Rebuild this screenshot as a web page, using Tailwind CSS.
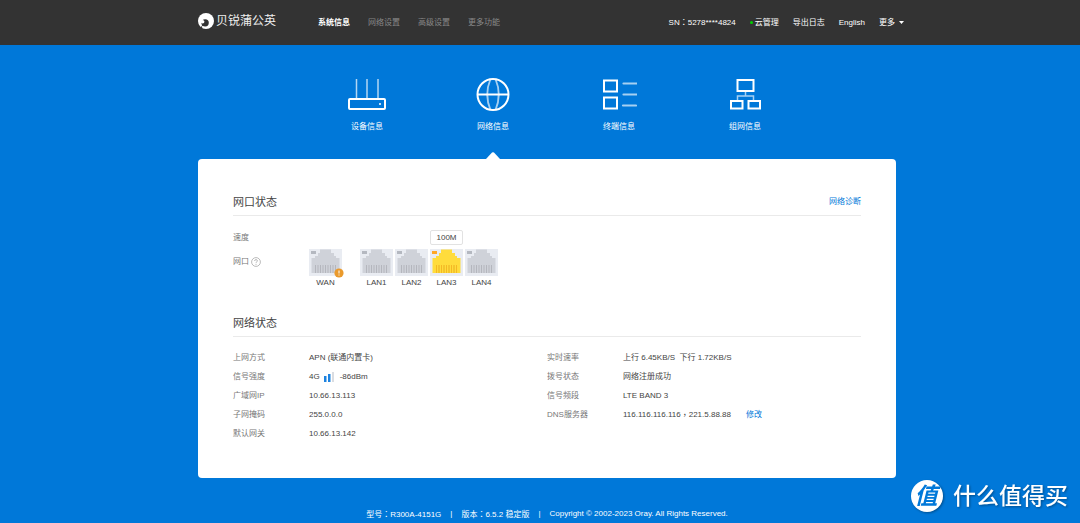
<!DOCTYPE html>
<html lang="zh-CN">
<head>
<meta charset="utf-8">
<meta name="viewport" content="width=device-width, initial-scale=1">
<title>贝锐蒲公英 - 网络信息</title>
<script src="https://cdn.jsdelivr.net/npm/@tailwindcss/browser@4"></script>
</head>
<body class="relative min-h-screen bg-[#0078d9] font-['Liberation_Sans','Noto_Sans_CJK_SC',sans-serif] text-[8px] leading-3 text-[#444]">

<svg class="hidden" aria-hidden="true">
  <symbol id="port" viewBox="0 0 33 27">
    <rect width="33" height="27" fill="#e9ecf2"/>
    <path d="M2.500 24V9H6V7H9V4h2V0.500h11V4h3v3h2v2h3.500v15z" fill="currentColor"/>
    <path d="M6.500 16v8M9 16v8M11.500 16v8M14 16v8M16.500 16v8M19 16v8M21.500 16v8M24 16v8M26.500 16v8" stroke="#000" stroke-opacity=".13" stroke-width="1"/>
  </symbol>
</svg>

<header class="bg-[#333] pl-[14px] text-white">
  <div class="mx-auto flex h-[45px] max-w-[698px] items-center">
    <a href="#" class="flex items-center gap-[2px] pb-1 text-[12px] leading-4 text-[#eee]">
      <svg class="size-4" viewBox="0 0 16 16"><circle cx="8" cy="8" r="8" fill="#fff"/><circle cx="7.200" cy="9.800" r="3.600" fill="#333"/><path d="M3.600 9.800L4.300 15.500L2 14L5.500 12.500z" fill="#333"/><circle cx="4.600" cy="8.800" r="1.800" fill="#fff"/></svg>
      <span>贝锐蒲公英</span>
    </a>
    <nav class="ml-[42px] flex gap-[18px] text-[#888]">
      <a href="#" class="font-bold text-white">系统信息</a>
      <a href="#">网络设置</a>
      <a href="#">高级设置</a>
      <a href="#">更多功能</a>
    </nav>
    <div class="-mr-2 ml-auto flex items-center gap-[14px] whitespace-nowrap">
      <span>SN<span class="font-['Noto_Sans_CJK_TC']" lang="zh-TW">：</span>5278****4824</span>
      <a href="#" class="flex items-center gap-[2px]"><i class="size-[3px] rounded-full bg-[#00d000]"></i>云管理</a>
      <a href="#">导出日志</a>
      <a href="#">English</a>
      <button type="button" class="flex items-center gap-1">更多<svg class="h-[3px] w-[5px]" viewBox="0 0 5 3"><path d="M0 0h5L2.500 3z" fill="#fff"/></svg></button>
    </div>
  </div>
</header>

<div class="pl-[14px]">
  <div class="mx-auto max-w-[698px]">
    <nav class="ml-[106px] flex pt-[32px] text-white">
      <a href="#" class="flex h-[82px] w-[126px] flex-col items-center gap-[8px]">
        <svg class="h-[36px] w-[40px]" viewBox="0 0 40 36" fill="none" stroke="#fff"><g stroke-width="1.500" stroke-opacity=".7"><path d="M9.500 2v20M20 2v20M31 2v20"/></g><rect x="2" y="22" width="36" height="10" rx="1" stroke-width="2"/><circle cx="33" cy="27" r="1" fill="#fff" stroke="none"/></svg>
        <span>设备信息</span>
      </a>
      <a href="#" aria-current="page" class="flex h-[82px] w-[126px] flex-col items-center gap-[8px]">
        <svg class="h-[36px] w-[36px]" viewBox="0 0 36 36" fill="none" stroke="#fff"><circle cx="18" cy="17.500" r="15.500" stroke-width="2"/><path d="M2.500 17.500h31" stroke-width="2"/><path d="M15.500 2Q9 17.500 15.500 33M20.500 2Q27 17.500 20.500 33" stroke-width="1.800" stroke-opacity=".65"/></svg>
        <span>网络信息</span>
        <svg class="mt-[11px] h-[7px] w-[14px] shrink-0" viewBox="0 0 14 7"><path d="M0 7L6 .6Q7-.2 8 .6L14 7z" fill="#fff"/></svg>
      </a>
      <a href="#" class="flex h-[82px] w-[126px] flex-col items-center gap-[8px]">
        <svg class="h-[36px] w-[36px]" viewBox="0 0 36 36" fill="none" stroke="#fff"><rect x="3" y="3.500" width="13" height="11" stroke-width="2"/><rect x="3" y="20.500" width="13" height="11" stroke-width="2"/><path d="M22.500 6.500h13M22.500 17.500h13M22 28.500h13" stroke-width="2.200" stroke-opacity=".65" stroke-linecap="round"/></svg>
        <span>终端信息</span>
      </a>
      <a href="#" class="flex h-[82px] w-[126px] flex-col items-center gap-[8px]">
        <svg class="h-[36px] w-[36px]" viewBox="0 0 36 36" fill="none" stroke="#fff"><rect x="10.500" y="3" width="16" height="11" stroke-width="2"/><path d="M18.500 14v5M10.500 24v-5h16v5" stroke-width="1.500" stroke-opacity=".65"/><rect x="4" y="24" width="11.500" height="7.500" stroke-width="2"/><rect x="21.500" y="24" width="11.500" height="7.500" stroke-width="2"/></svg>
        <span>组网信息</span>
      </a>
    </nav>

    <main class="rounded bg-white p-[35px]">
      <section>
        <div class="flex items-center justify-between border-b border-[#eaeaea] pb-[5px]">
          <h2 class="text-[11px] leading-4">网口状态</h2>
          <a href="#" class="text-[#0078d9]">网络诊断</a>
        </div>
        <div class="mt-[14px] grid grid-cols-[74px_49px_33px_33px_33px_33px] gap-x-[2px] gap-y-1">
          <span class="self-center text-[#777]">速度</span>
          <span class="col-start-5 flex h-[15px] items-center justify-center rounded-[2px] border border-[#e2e2e2]">100M</span>
          <div class="col-start-1 flex items-start gap-[2px] pt-[7px] text-[#777]">网口
            <button type="button" aria-label="帮助"><svg class="mt-px size-[10px]" viewBox="0 0 10 10" fill="none" stroke="#aaa" stroke-width=".8"><circle cx="5" cy="5" r="4.400"/><path d="M3.600 4Q3.600 2.600 5 2.600T6.400 3.900Q6.400 4.600 5.600 5T5 6.200M5 7v.9"/></svg></button>
          </div>
          <div class="relative w-[33px] text-center">
            <svg class="mb-px block h-[27px] w-[33px] text-[#cfd2d9]"><use href="#port"/><rect x="2" y="2" width="5" height="3" fill="#b4b8c0"/></svg>WAN
            <svg class="absolute top-[19px] -right-[2px] size-[10px]" viewBox="0 0 10 10"><circle cx="5" cy="5" r="4.600" fill="#ea9a2c"/><path d="M5 2.500v3M5 6.500v1" stroke="#fff" stroke-width="1"/></svg>
          </div>
          <div class="text-center"><svg class="mb-px block h-[27px] w-[33px] text-[#cfd2d9]"><use href="#port"/><rect x="2" y="2" width="5" height="3" fill="#b4b8c0"/></svg>LAN1</div>
          <div class="text-center"><svg class="mb-px block h-[27px] w-[33px] text-[#cfd2d9]"><use href="#port"/><rect x="2" y="2" width="5" height="3" fill="#b4b8c0"/></svg>LAN2</div>
          <div class="text-center"><svg class="mb-px block h-[27px] w-[33px] text-[#ffdc3c]"><use href="#port"/><rect x="2" y="2" width="5" height="3" fill="#ffa726"/><path d="M6.500 16v8M9 16v8M11.500 16v8M14 16v8M16.500 16v8M19 16v8M21.500 16v8M24 16v8M26.500 16v8" stroke="#ffb41e" stroke-opacity=".7"/></svg>LAN3</div>
          <div class="text-center"><svg class="mb-px block h-[27px] w-[33px] text-[#cfd2d9]"><use href="#port"/><rect x="2" y="2" width="5" height="3" fill="#b4b8c0"/></svg>LAN4</div>
        </div>
      </section>

      <section class="mt-[26px]">
        <h2 class="border-b border-[#eaeaea] pb-[5px] text-[11px] leading-4">网络状态</h2>
        <div class="mt-[11px] grid grid-cols-2 items-start leading-[19px]">
          <dl class="grid grid-cols-[76px_1fr]">
            <dt class="text-[#777]">上网方式</dt><dd>APN (联通内置卡)</dd>
            <dt class="text-[#777]">信号强度</dt><dd class="flex h-[19px] items-center">4G<svg class="mr-[6px] ml-1 h-[10px] w-[10px]" viewBox="0 0 10 10"><path d="M0 4h2.500v6H0zM4 2h2.500v8H4z" fill="#1e83e0"/><path d="M8.500 0h1v10h-1z" fill="#b5bcc6"/></svg>-86dBm</dd>
            <dt class="text-[#777]">广域网IP</dt><dd>10.66.13.113</dd>
            <dt class="text-[#777]">子网掩码</dt><dd>255.0.0.0</dd>
            <dt class="text-[#777]">默认网关</dt><dd>10.66.13.142</dd>
          </dl>
          <dl class="grid grid-cols-[76px_1fr]">
            <dt class="text-[#777]">实时速率</dt><dd>上行 6.45KB/S&nbsp; 下行 1.72KB/S</dd>
            <dt class="text-[#777]">拨号状态</dt><dd>网络注册成功</dd>
            <dt class="text-[#777]">信号频段</dt><dd>LTE BAND 3</dd>
            <dt class="text-[#777]">DNS服务器</dt><dd class="flex h-[19px]">116.116.116.116<span class="font-['Noto_Sans_CJK_TC']" lang="zh-TW">，</span>221.5.88.88<a href="#" class="ml-[15px] text-[#0078d9]">修改</a></dd>
          </dl>
        </div>
      </section>
    </main>

    <footer class="flex justify-center gap-[9px] pt-[30px] text-white">
      <span>型号<span class="font-['Noto_Sans_CJK_TC']" lang="zh-TW">：</span>R300A-4151G</span><span>|</span><span>版本<span class="font-['Noto_Sans_CJK_TC']" lang="zh-TW">：</span>6.5.2 稳定版</span><span>|</span><span>Copyright © 2002-2023 Oray. All Rights Reserved.</span>
    </footer>
  </div>
</div>

<div class="absolute right-3 bottom-[11px] flex items-center gap-[10px] text-[23px] leading-8 font-medium text-white drop-shadow-[1px_1px_1px_rgba(0,0,0,0.35)]">
  <span class="flex size-8 items-center justify-center rounded-full bg-white pr-[2px] text-[23px] font-bold text-[#0078d9] italic">值</span>
  <span>什么值得买</span>
</div>
</body>
</html>
